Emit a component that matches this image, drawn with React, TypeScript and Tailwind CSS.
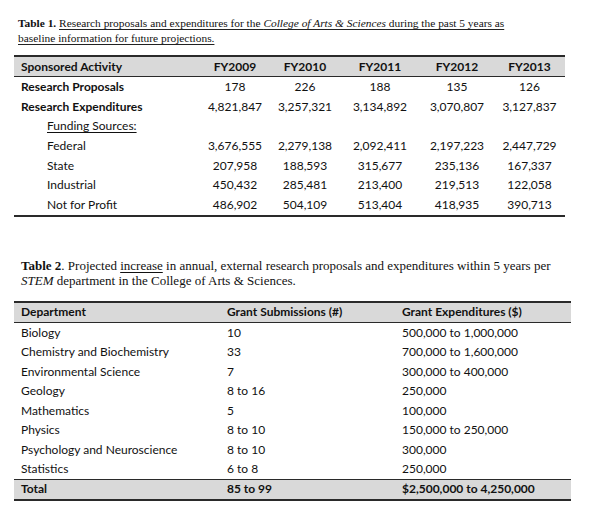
import React from "react";

const t1Rows: { label: string; bold?: boolean; indent?: boolean; vals: string[]; underline?: boolean }[] = [
  { label: "Research Proposals", bold: true, vals: ["178", "226", "188", "135", "126"] },
  { label: "Research Expenditures", bold: true, vals: ["4,821,847", "3,257,321", "3,134,892", "3,070,807", "3,127,837"] },
  { label: "Funding Sources:", indent: true, underline: true, vals: ["", "", "", "", ""] },
  { label: "Federal", indent: true, vals: ["3,676,555", "2,279,138", "2,092,411", "2,197,223", "2,447,729"] },
  { label: "State", indent: true, vals: ["207,958", "188,593", "315,677", "235,136", "167,337"] },
  { label: "Industrial", indent: true, vals: ["450,432", "285,481", "213,400", "219,513", "122,058"] },
  { label: "Not for Profit", indent: true, vals: ["486,902", "504,109", "513,404", "418,935", "390,713"] },
];

const t2Rows = [
  ["Biology", "10", "500,000 to 1,000,000"],
  ["Chemistry and Biochemistry", "33", "700,000 to 1,600,000"],
  ["Environmental Science", "7", "300,000 to 400,000"],
  ["Geology", "8 to 16", "250,000"],
  ["Mathematics", "5", "100,000"],
  ["Physics", "8 to 10", "150,000 to 250,000"],
  ["Psychology and Neuroscience", "8 to 10", "300,000"],
  ["Statistics", "6 to 8", "250,000"],
];

const t1Cols = "grid grid-cols-[186px_70px_70px_80px_74px_71px]";
const t2Cols = "grid grid-cols-[206px_175px_176px]";
const ul =
  "underline decoration-[#222] underline-offset-[2px] [text-decoration-skip-ink:none] border-b border-dotted border-[#5aa84a]";

export default function App() {
  return (
    <div className="w-[600px] h-[519px] bg-white text-[#111] overflow-hidden">
      {/* Table 1 caption */}
      <div className="pt-[16px] pl-[18px] font-['Liberation_Serif',serif] text-[11.4px] leading-[15px] whitespace-nowrap">
        <div>
          <span className="font-bold">Table 1. </span>
          <span className={ul}>
            Research proposals and expenditures for the <i>College of Arts &amp; Sciences</i> during the past 5 years as
          </span>
        </div>
        <div>
          <span className={ul}>baseline information for future projections.</span>
        </div>
      </div>

      {/* Table 1 */}
      <div className="mt-[9px] ml-[14px] w-[551px] font-['Lato',sans-serif] text-[12px] border-t-2 border-b-2 border-[#2a2a2a]">
        <div className={`${t1Cols} h-[20px] items-center bg-[#d9d9d9] border-b border-[#2a2a2a] font-bold`}>
          <div className="pl-[7px]">Sponsored Activity</div>
          {["FY2009", "FY2010", "FY2011", "FY2012", "FY2013"].map((h) => (
            <div key={h} className="text-center">{h}</div>
          ))}
        </div>
        {t1Rows.map((r) => (
          <div key={r.label} className={`${t1Cols} h-[19.7px] items-center`}>
            <div className={`${r.indent ? "pl-[33px]" : "pl-[7px]"} ${r.bold ? "font-bold" : ""}`}>
              <span className={r.underline ? "underline underline-offset-[2px]" : ""}>{r.label}</span>
            </div>
            {r.vals.map((v, i) => (
              <div key={i} className="text-center">{v}</div>
            ))}
          </div>
        ))}
      </div>

      {/* Table 2 caption */}
      <div className="mt-[41px] pl-[21px] pr-[40px] font-['Liberation_Serif',serif] text-[13px] leading-[15px]">
        <span className="font-bold">Table 2</span>. Projected <span className="underline underline-offset-[2px]">increase</span> in annual, external research proposals and expenditures within 5 years per <i>STEM</i> department in the College of Arts &amp; Sciences.
      </div>

      {/* Table 2 */}
      <div className="mt-[13px] ml-[14px] w-[557px] font-['Lato',sans-serif] text-[12px] border-t-2 border-b-2 border-[#2a2a2a]">
        <div className={`${t2Cols} h-[20px] items-center bg-[#d9d9d9] border-b border-[#2a2a2a] font-bold`}>
          <div className="pl-[7px]">Department</div>
          <div className="pl-[7px]">Grant Submissions (#)</div>
          <div className="pl-[7px]">Grant Expenditures ($)</div>
        </div>
        {t2Rows.map((r) => (
          <div key={r[0]} className={`${t2Cols} h-[19.5px] items-center`}>
            {r.map((c, i) => (
              <div key={i} className="pl-[7px]">{c}</div>
            ))}
          </div>
        ))}
        <div className={`${t2Cols} h-[20px] items-center bg-[#d9d9d9] border-t border-[#2a2a2a] font-bold`}>
          <div className="pl-[7px]">Total</div>
          <div className="pl-[7px]">85 to 99</div>
          <div className="pl-[7px]">$2,500,000 to 4,250,000</div>
        </div>
      </div>
    </div>
  );
}
